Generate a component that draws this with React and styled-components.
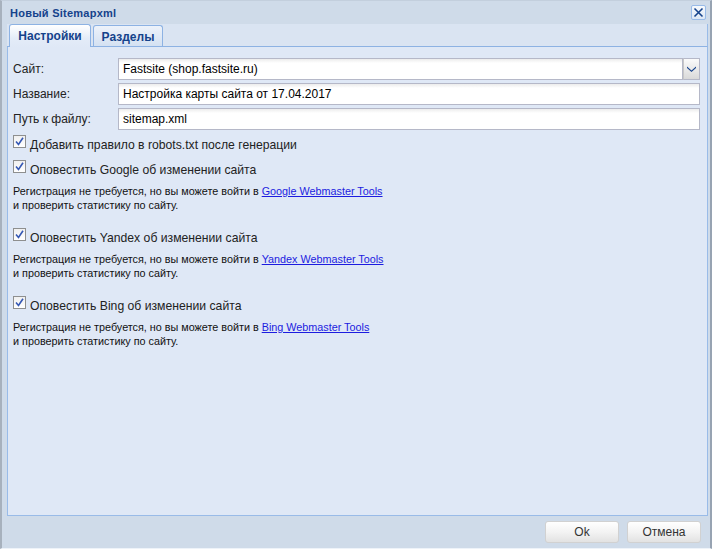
import styled, { createGlobalStyle } from "styled-components";

const GlobalStyle = createGlobalStyle`
  html, body {
    margin: 0;
    padding: 0;
    background: #cfdbe9;
  }
  * {
    box-sizing: border-box;
  }
`;

const FONT = `"Liberation Sans", Arial, sans-serif`;

const notifiers = [
  { name: "Google", tool: "Google Webmaster Tools" },
  { name: "Yandex", tool: "Yandex Webmaster Tools" },
  { name: "Bing", tool: "Bing Webmaster Tools" },
];

const CloseIcon = () => (
  <svg width="11" height="11" viewBox="0 0 11 11">
    <path
      d="M1.5 1.5 L9.5 9.5 M9.5 1.5 L1.5 9.5"
      stroke="#15428b"
      strokeWidth="1.6"
      fill="none"
    />
  </svg>
);

const ChevronIcon = () => (
  <svg width="9" height="6" viewBox="0 0 9 6">
    <path d="M0 0.5 L4.5 4.5 L9 0.5 L9 2 L4.5 6 L0 2 Z" fill="#15428b" />
  </svg>
);

const CheckIcon = () => (
  <svg width="9" height="9" viewBox="0 0 9 9">
    <path
      d="M1 4.5 L3.5 7.5 L8 0.8"
      stroke="#3558b4"
      strokeWidth="1.6"
      fill="none"
    />
  </svg>
);

const Check = ({ children }) => (
  <CheckRow>
    <CheckBox>
      <CheckIcon />
    </CheckBox>
    <CheckLabel>{children}</CheckLabel>
  </CheckRow>
);

const App = () => {
  return (
    <>
      <GlobalStyle />
      <Window>
        <Header>
          <Title>Новый Sitemapxml</Title>
          <CloseButton>
            <CloseIcon />
          </CloseButton>
        </Header>
        <TabPanel>
          <TabStrip>
            <Tab $active $width={82}>
              Настройки
            </Tab>
            <Tab $width={70}>Разделы</Tab>
          </TabStrip>
          <TabBody>
            <Fields>
              <FieldRow>
                <FieldLabel>Сайт:</FieldLabel>
                <Combo>
                  <Input as="div">Fastsite (shop.fastsite.ru)</Input>
                  <Trigger>
                    <ChevronIcon />
                  </Trigger>
                </Combo>
              </FieldRow>
              <FieldRow>
                <FieldLabel>Название:</FieldLabel>
                <Input as="div">Настройка карты сайта от 17.04.2017</Input>
              </FieldRow>
              <FieldRow>
                <FieldLabel>Путь к файлу:</FieldLabel>
                <Input as="div">sitemap.xml</Input>
              </FieldRow>
            </Fields>

            <Options>
              <Check>Добавить правило в robots.txt после генерации</Check>
              {notifiers.map((n) => (
                <Notify key={n.name}>
                  <Check>Оповестить {n.name} об изменении сайта</Check>
                  <Hint>
                    Регистрация не требуется, но вы можете войти в{" "}
                    <HintLink href="#">{n.tool}</HintLink>
                    <br />
                    и проверить статистику по сайту.
                  </Hint>
                </Notify>
              ))}
            </Options>
          </TabBody>
        </TabPanel>
        <Footer>
          <Button>Ok</Button>
          <Button>Отмена</Button>
        </Footer>
      </Window>
    </>
  );
};

const Window = styled.div`
  width: 712px;
  height: 549px;
  display: flex;
  flex-direction: column;
  background: #cfdbe9;
  border-left: 2px solid #a7b1bd;
  border-right: 2px solid #97a3b2;
  border-top: 1px solid #c3cfdd;
  border-bottom: 1px solid #eef3f9;
  font-family: ${FONT};
`;

const Header = styled.div`
  height: 23px;
  flex: none;
  display: flex;
  align-items: center;
  justify-content: space-between;
  padding: 0 4px 0 8px;
`;

const Title = styled.span`
  font-size: 11px;
  font-weight: bold;
  letter-spacing: 0.25px;
  color: #15428b;
`;

const CloseButton = styled.div`
  width: 15px;
  height: 15px;
  display: flex;
  align-items: center;
  justify-content: center;
  background: linear-gradient(#f6f9fd, #dde7f4);
  border: 1px solid #99bbe8;
  border-radius: 2px;
`;

const TabPanel = styled.div`
  flex: 1;
  display: flex;
  flex-direction: column;
  margin: 0 2px 0 5px;
  min-height: 0;
`;

const TabStrip = styled.div`
  height: 23px;
  flex: none;
  display: flex;
  align-items: flex-end;
  gap: 2px;
  padding-left: 2px;
  background: #dae4f2;
  border-bottom: 1px solid #8db2e3;
  border-right: 1px solid #99bbe8;
`;

const Tab = styled.div`
  width: ${(p) => p.$width}px;
  height: ${(p) => (p.$active ? "23px" : "21px")};
  margin-bottom: ${(p) => (p.$active ? "-1px" : "0")};
  padding-top: ${(p) => (p.$active ? "0" : "1px")};
  display: flex;
  align-items: center;
  justify-content: center;
  font-size: 12px;
  font-weight: bold;
  color: #15428b;
  border: 1px solid #8db2e3;
  border-bottom: none;
  border-radius: 3px 3px 0 0;
  background: ${(p) =>
    p.$active
      ? "linear-gradient(#ffffff, #e4ecf8 60%, #dfe8f6)"
      : "linear-gradient(#edf2fa, #d4e1f2)"};
`;

const TabBody = styled.div`
  flex: 1;
  background: #dfe8f6;
  border: 1px solid #99bbe8;
  border-top: none;
  padding: 11px 7px 0 5px;
`;

const Fields = styled.div`
  display: flex;
  flex-direction: column;
  gap: 3px;
`;

const FieldRow = styled.div`
  display: flex;
  align-items: center;
  height: 22px;
`;

const FieldLabel = styled.label`
  width: 105px;
  flex: none;
  font-size: 12px;
  color: #222;
`;

const Input = styled.input`
  flex: 1;
  height: 22px;
  display: flex;
  align-items: center;
  padding: 0 4px;
  font-family: ${FONT};
  font-size: 12px;
  color: #000;
  background: linear-gradient(#ececec, #ffffff 4px);
  border: 1px solid #b5b8c8;
  white-space: nowrap;
  overflow: hidden;
`;

const Combo = styled.div`
  flex: 1;
  display: flex;
  height: 22px;
`;

const Trigger = styled.div`
  width: 17px;
  flex: none;
  display: flex;
  align-items: center;
  justify-content: center;
  background: linear-gradient(#fbfbfb, #d9d9d9);
  border: 1px solid #b5b8c8;
  border-left: 1px solid #c7c7c7;
`;

const Options = styled.div`
  margin-top: 5px;
`;

const CheckRow = styled.div`
  display: flex;
  align-items: flex-start;
  gap: 4px;
  height: 25px;
`;

const CheckBox = styled.span`
  width: 13px;
  height: 13px;
  flex: none;
  display: flex;
  align-items: center;
  justify-content: center;
  background: linear-gradient(#f0f0f0, #ffffff);
  border: 1px solid #8e8f8f;
`;

const CheckLabel = styled.span`
  padding-top: 3px;
  font-size: 12.2px;
  line-height: 14px;
  color: #222;
`;

const Notify = styled.div`
  & + & {
    margin-top: 16px;
  }
`;

const Hint = styled.p`
  margin: -1px 0 0;
  font-size: 10.8px;
  line-height: 14px;
  color: #111;
`;

const HintLink = styled.a`
  color: #1c1ce0;
  text-decoration: underline;
`;

const Footer = styled.div`
  height: 32px;
  flex: none;
  display: flex;
  align-items: center;
  justify-content: flex-end;
  gap: 8px;
  padding-right: 9px;
`;

const Button = styled.div`
  width: 74px;
  height: 22px;
  display: flex;
  align-items: center;
  justify-content: center;
  font-size: 12px;
  color: #333;
  background: linear-gradient(#ffffff, #f3f3f3 50%, #e2e2e2);
  border: 1px solid #d1d1d1;
  border-radius: 3px;
`;

export default App;
